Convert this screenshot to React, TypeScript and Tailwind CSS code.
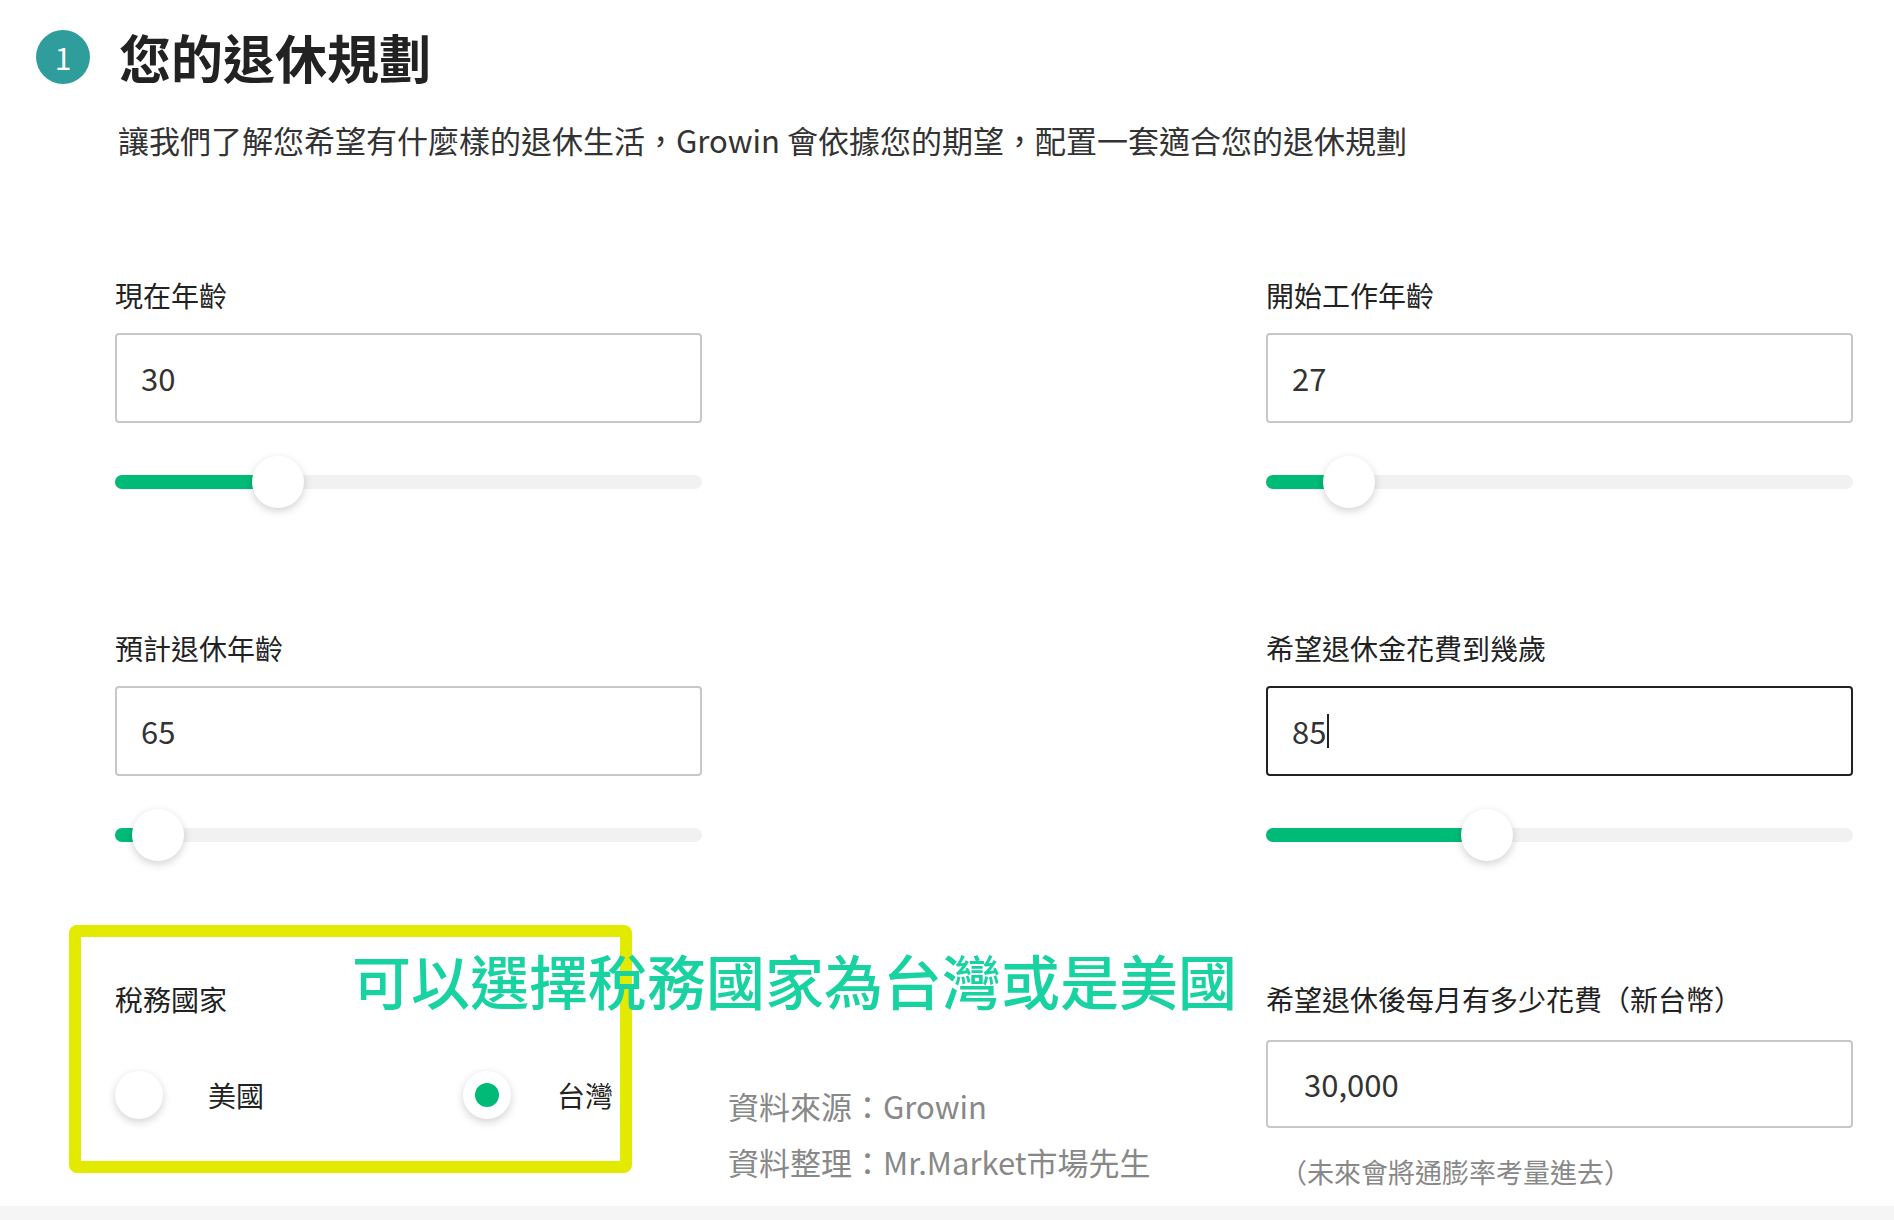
const F = { fontFamily: '"Noto Sans CJK TC", "Noto Sans", sans-serif' };

function Field({ label, value, pct, focused }: { label: string; value: string; pct: number; focused?: boolean }) {
  return (
    <div className="w-[587px]">
      <div className="text-[28px] leading-none text-[#222] h-[28px]">{label}</div>
      <div className={`mt-[24px] h-[90px] rounded-[4px] border-2 ${focused ? 'border-[#222]' : 'border-[#c8c8c8]'} flex items-center pl-[24px] text-[31px] text-[#333]`}>
        {value}{focused && <span className="inline-block w-[2px] h-[34px] bg-[#222] ml-[1px]" />}
      </div>
      <div className="relative mt-[52px] h-[14px] rounded-full bg-[#f1f1f1]">
        <div className="h-full rounded-full bg-[#00bb77]" style={{ width: `${pct}px` }} />
        <div className="absolute top-1/2 -translate-y-1/2 -translate-x-1/2 w-[52px] h-[52px] rounded-full bg-white shadow-[0_3px_8px_rgba(0,0,0,0.18)]" style={{ left: `${pct}px` }} />
      </div>
    </div>
  );
}

export default function App() {
  return (
    <div className="relative w-[1894px] h-[1220px] bg-white overflow-hidden" style={F}>
      <div className="absolute left-0 right-0 bottom-0 h-[14px] bg-[#f5f5f5]" />
      <div className="flex items-center pt-[30px] pl-[36px]">
        <div className="w-[54px] h-[54px] rounded-full bg-[#2f9d9b] text-white text-[30px] flex items-center justify-center">1</div>
        <div className="ml-[29px] text-[52px] font-bold text-[#222] leading-none">您的退休規劃</div>
      </div>
      <div className="mt-[40px] ml-[118px] text-[31px] text-[#333] leading-none">讓我們了解您希望有什麼樣的退休生活，Growin 會依據您的期望，配置一套適合您的退休規劃</div>
      <div className="mt-[126px] pl-[115px] pr-[41px] flex justify-between">
        <Field label="現在年齡" value="30" pct={163} />
        <Field label="開始工作年齡" value="27" pct={83} />
      </div>
      <div className="mt-[145px] pl-[115px] pr-[41px] flex justify-between">
        <Field label="預計退休年齡" value="65" pct={43} />
        <Field label="希望退休金花費到幾歲" value="85" pct={221} focused />
      </div>
      <div className="mt-[143px] pl-[115px] pr-[41px] flex justify-between">
        <div className="w-[587px] pt-[0px]">
          <div className="text-[28px] leading-none text-[#222] h-[28px]">稅務國家</div>
          <div className="mt-[58px] flex items-center">
            <div className="w-[48px] h-[48px] rounded-full bg-white shadow-[0_3px_8px_rgba(0,0,0,0.18)]" />
            <span className="ml-[45px] text-[28px] text-[#222]">美國</span>
            <div className="ml-[199px] w-[48px] h-[48px] rounded-full bg-white shadow-[0_3px_8px_rgba(0,0,0,0.18)] flex items-center justify-center">
              <div className="w-[24px] h-[24px] rounded-full bg-[#00bb77]" />
            </div>
            <span className="ml-[46px] text-[28px] text-[#222]">台灣</span>
          </div>
        </div>
        <div className="w-[587px]">
          <div className="text-[28px] leading-none text-[#222] h-[28px]">希望退休後每月有多少花費（新台幣）</div>
          <div className="mt-[27px] h-[88px] rounded-[4px] border-2 border-[#c8c8c8] flex items-center pl-[36px] text-[31px] text-[#333]">30,000</div>
          <div className="mt-[30px] ml-[14px] text-[27px] text-[#888] leading-none">（未來會將通膨率考量進去）</div>
        </div>
      </div>
      <div className="absolute left-[728px] top-[1078px] text-[31px] text-[#888] leading-[56px]">
        <div>資料來源：Growin</div>
        <div>資料整理：Mr.Market市場先生</div>
      </div>
      <div className="absolute left-[69px] top-[925px] w-[563px] h-[248px] border-[12px] border-[#e2ea00] rounded-[8px]" />
      <div className="absolute left-[352px] top-[950px] text-[59px] leading-none font-medium text-[#18d3a1] whitespace-nowrap">可以選擇稅務國家為台灣或是美國</div>
    </div>
  );
}
